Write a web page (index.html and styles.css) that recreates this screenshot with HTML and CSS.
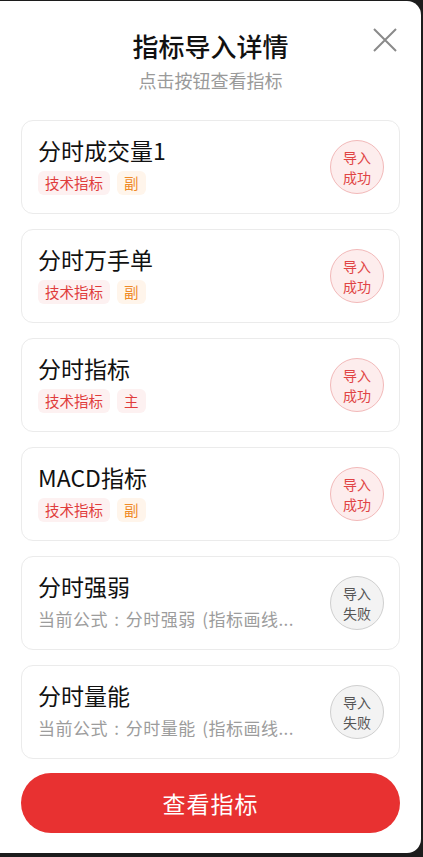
FILE: index.html
```html
<!DOCTYPE html>
<html lang="zh-CN">
<head>
  <meta charset="UTF-8" />
  <title>指标导入详情</title>
  <meta name="viewport" content="width=device-width, initial-scale=1.0" />
  <link rel="stylesheet" href="styles.css">
</head>
<body>

<div class="modal">
  <button class="close" aria-label="关闭">
    <svg viewBox="0 0 24 24" width="24" height="24">
      <path d="M1 1 L23 23 M23 1 L1 23" stroke="#8a8a8a" stroke-width="2" fill="none" />
    </svg>
  </button>

  <header class="head">
    <h1>指标导入详情</h1>
    <p>点击按钮查看指标</p>
  </header>

  <div class="list">
    <div class="item">
      <div class="info">
        <div class="name">分时成交量1</div>
        <div class="tags"><span class="tag">技术指标</span><span class="tag sub">副</span></div>
      </div>
      <div class="status ok">导入<br>成功</div>
    </div>

    <div class="item">
      <div class="info">
        <div class="name">分时万手单</div>
        <div class="tags"><span class="tag">技术指标</span><span class="tag sub">副</span></div>
      </div>
      <div class="status ok">导入<br>成功</div>
    </div>

    <div class="item">
      <div class="info">
        <div class="name">分时指标</div>
        <div class="tags"><span class="tag">技术指标</span><span class="tag">主</span></div>
      </div>
      <div class="status ok">导入<br>成功</div>
    </div>

    <div class="item">
      <div class="info">
        <div class="name">MACD指标</div>
        <div class="tags"><span class="tag">技术指标</span><span class="tag sub">副</span></div>
      </div>
      <div class="status ok">导入<br>成功</div>
    </div>

    <div class="item">
      <div class="info">
        <div class="name">分时强弱</div>
        <div class="formula">当前公式 : 分时强弱 (指标画线...</div>
      </div>
      <div class="status fail">导入<br>失败</div>
    </div>

    <div class="item">
      <div class="info">
        <div class="name">分时量能</div>
        <div class="formula">当前公式 : 分时量能 (指标画线...</div>
      </div>
      <div class="status fail">导入<br>失败</div>
    </div>
  </div>

  <button class="btn">查看指标</button>
</div>

</body>
</html>
```

FILE: styles.css
```css
/* Base */
* {
  box-sizing: border-box;
  margin: 0;
  padding: 0;
}

body {
  font-family: "Noto Sans CJK SC", "Noto Sans", sans-serif;
  background-color: #1c1c1c;
  color: #111;
  overflow: hidden;
}

.modal {
  position: relative;
  width: 421px;
  height: 852px;
  margin-top: 1px;
  background: #fff;
  border-radius: 0 14px 14px 0;
  padding: 27px 21px 0 21px;
}

.close {
  position: absolute;
  top: 27px;
  right: 24px;
  width: 24px;
  height: 24px;
  border: none;
  background: none;
  display: flex;
}

/* Header */
.head {
  text-align: center;
  margin-bottom: 27px;
}

.head h1 {
  font-size: 26px;
  font-weight: 500;
  line-height: 36px;
  color: #111;
}

.head p {
  font-size: 18px;
  line-height: 26px;
  margin-top: 3px;
  color: #9a9a9a;
}

/* List */
.list {
  display: flex;
  flex-direction: column;
  gap: 15px;
}

.item {
  height: 94px;
  border: 1px solid #ebebeb;
  border-radius: 12px;
  padding: 0 15px 0 16px;
  display: flex;
  align-items: center;
  justify-content: space-between;
}

.info {
  min-width: 0;
  flex: 1;
  display: flex;
  flex-direction: column;
  gap: 7px;
  margin-top: -3px;
}

.name {
  font-size: 23px;
  font-weight: 400;
  line-height: 28px;
  color: #111;
}

.tags {
  display: flex;
  gap: 7px;
}

.tag {
  height: 24px;
  line-height: 24px;
  padding: 0 7px;
  border-radius: 6px;
  font-size: 14.5px;
  background: #fdf1f1;
  color: #e03c3c;
}

.tag.sub {
  background: #fff5eb;
  color: #ef8a27;
}

.formula {
  font-size: 17px;
  line-height: 24px;
  color: #9c9c9c;
  white-space: nowrap;
  letter-spacing: 0.5px;
  word-spacing: 2px;
}

.status {
  width: 54px;
  height: 54px;
  flex-shrink: 0;
  border-radius: 50%;
  display: flex;
  align-items: center;
  justify-content: center;
  text-align: center;
  font-size: 14px;
  line-height: 20px;
}

.status.ok {
  background: #fdeded;
  border: 1px solid #f2b9b9;
  color: #e04444;
}

.status.fail {
  background: #f3f3f3;
  border: 1px solid #cfcfcf;
  color: #555;
}

/* Bottom button */
.btn {
  display: block;
  width: 100%;
  height: 60px;
  margin-top: 14px;
  border: none;
  border-radius: 30px;
  background: #e83131;
  color: #fff;
  font-family: inherit;
  font-size: 23px;
  letter-spacing: 1px;
}
```
